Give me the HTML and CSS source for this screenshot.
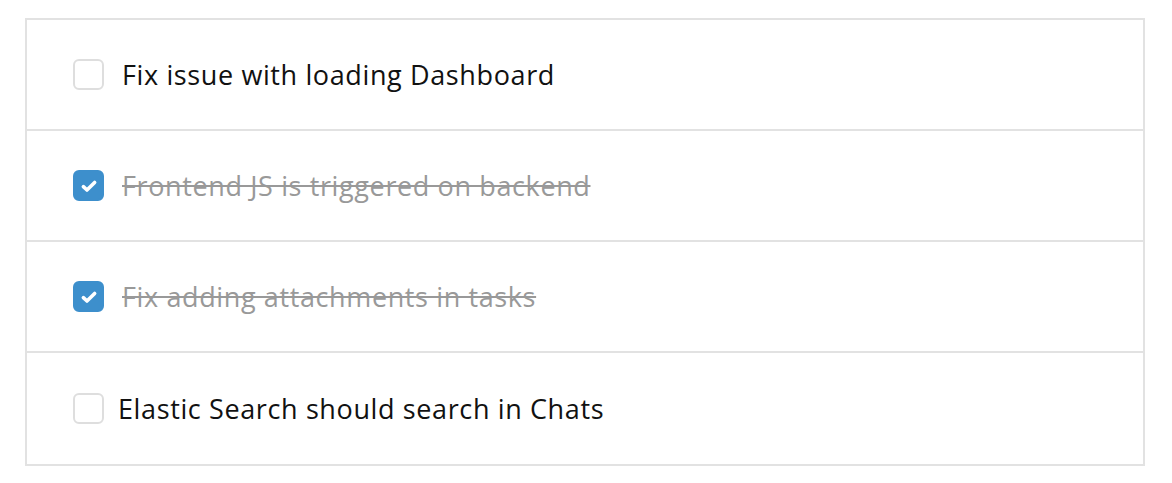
FILE: index.html
```html
<!DOCTYPE html>
<html lang="en">
<head>
<meta charset="UTF-8" />
<title>Tasks</title>
<link rel="stylesheet" href="styles.css">
</head>
<body>
  <ul class="task-list">
    <li class="task">
      <span class="check"></span>
      <span class="label">Fix issue with loading Dashboard</span>
    </li>
    <li class="task done">
      <span class="check">
        <svg viewBox="0 0 16 16" width="18" height="18"><path d="M3 8.6l3.2 3L13 4.9" fill="none" stroke="#fff" stroke-width="3.2" stroke-linecap="round" stroke-linejoin="round"/></svg>
      </span>
      <span class="label">Frontend JS is triggered on backend</span>
    </li>
    <li class="task done">
      <span class="check">
        <svg viewBox="0 0 16 16" width="18" height="18"><path d="M3 8.6l3.2 3L13 4.9" fill="none" stroke="#fff" stroke-width="3.2" stroke-linecap="round" stroke-linejoin="round"/></svg>
      </span>
      <span class="label">Fix adding attachments in tasks</span>
    </li>
    <li class="task tight">
      <span class="check"></span>
      <span class="label">Elastic Search should search in Chats</span>
    </li>
  </ul>
</body>
</html>
```

FILE: styles.css
```css
* {
  box-sizing: border-box;
}
body {
  margin: 0;
  padding: 18px 27px 0 25px;
  background: #fff;
  font-family: 'Open Sans', 'Noto Sans', sans-serif;
  color: #111;
}
.task-list {
  list-style: none;
  margin: 0;
  padding: 0;
  border: 2px solid #e2e2e2;
}
.task {
  display: flex;
  align-items: center;
  height: 111px;
  padding-left: 46px;
  border-bottom: 2px solid #e2e2e2;
}
.task:last-child {
  border-bottom: none;
}
.check {
  width: 31px;
  height: 31px;
  border: 2px solid #dedede;
  border-radius: 6px;
  background: #fff;
  display: flex;
  align-items: center;
  justify-content: center;
  flex-shrink: 0;
}
.label {
  margin-left: 18px;
  font-size: 27px;
  letter-spacing: 0.62px;
}
.tight .label {
  margin-left: 14px;
}
.done .check {
  background: #3d8fcc;
  border-color: #3d8fcc;
}
.done .label {
  color: #999;
  text-decoration: line-through;
}
```
